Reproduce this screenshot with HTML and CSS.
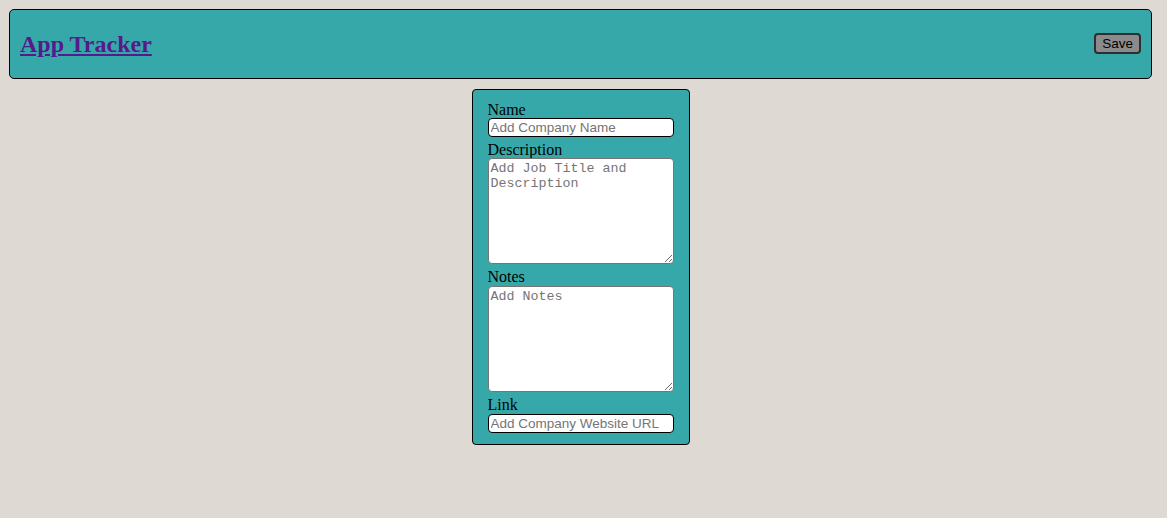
FILE: index.html
```html
<!DOCTYPE html>
<html lang="en">
<head>
<meta charset="utf-8">
<title>App Tracker</title>
<link rel="stylesheet" href="styles.css">
</head>
<body>
<header class="topbar">
  <h2 class="brand"><a class="brand-link" href="#">App Tracker</a></h2>
  <button class="save-btn" type="button">Save</button>
</header>
<main class="main">
  <form class="card">
    <label class="field-label" for="name">Name</label>
    <input class="field-input field-first" id="name" type="text" placeholder="Add Company Name">
    <label class="field-label" for="desc">Description</label>
    <textarea class="field-area field-first" id="desc" placeholder="Add Job Title and Description"></textarea>
    <label class="field-label" for="notes">Notes</label>
    <textarea class="field-area" id="notes" placeholder="Add Notes"></textarea>
    <label class="field-label" for="link">Link</label>
    <input class="field-input" id="link" type="text" placeholder="Add Company Website URL">
  </form>
</main>
</body>
</html>
```

FILE: styles.css
```css
html {
  background: #dfd9d3;
}
body {
  margin: 9px 15px 0 9px;
  font-family: "Liberation Serif", "Times New Roman", serif;
  font-size: 16px;
  color: #000;
}
.topbar {
  display: flex;
  align-items: center;
  justify-content: space-between;
  background: #37a8a9;
  border: 1px solid #000;
  border-radius: 5px;
  padding: 0 10px;
  height: 68px;
}
.brand {
  margin: 0;
  font-size: 24px;
  font-weight: bold;
  line-height: 28px;
}
.brand-link {
  color: #551a8b;
  text-decoration: underline;
}
.save-btn {
  font-family: "Liberation Sans", Arial, sans-serif;
  font-size: 13.5px;
  line-height: 15px;
  color: #000;
  background: #8b8b8b;
  border: 2px solid #2e2e2e;
  border-radius: 4px;
  padding: 1px 6px;
  height: 21px;
  margin-top: -1px;
}
.main {
  display: flex;
  justify-content: center;
  padding-top: 10px;
}
.card {
  display: flex;
  flex-direction: column;
  align-items: flex-start;
  width: 186px;
  padding: 10px 15px 11px 15px;
  background: #37a8a9;
  border: 1px solid #000;
  border-radius: 4px;
}
.field-label {
  display: block;
  line-height: 14px;
  padding-top: 4px;
  margin-top: 2px;
}
.field-label:first-child {
  margin-top: 0;
  line-height: 16px;
  padding-top: 2px;
}
.field-input {
  box-sizing: border-box;
  width: 186px;
  height: 19px;
  margin: 2px 0 0 0;
  padding: 1px 2px;
  border: 1px solid #000;
  border-radius: 4px;
  background: #fff;
  font-family: "Liberation Sans", Arial, sans-serif;
  font-size: 13.5px;
}
.field-input::placeholder,
.field-area::placeholder {
  color: #757575;
}
.field-area {
  box-sizing: border-box;
  width: 186px;
  height: 106px;
  margin: 2px 0 0 0;
  padding: 2px;
  border: 1px solid #767676;
  border-radius: 4px;
  background: #fff;
  font-family: "Liberation Mono", "Courier New", monospace;
  font-size: 13.33px;
  line-height: 15px;
}
.field-first {
  margin-top: 0;
}
.field-area.field-first {
  margin-top: 1px;
}
```
